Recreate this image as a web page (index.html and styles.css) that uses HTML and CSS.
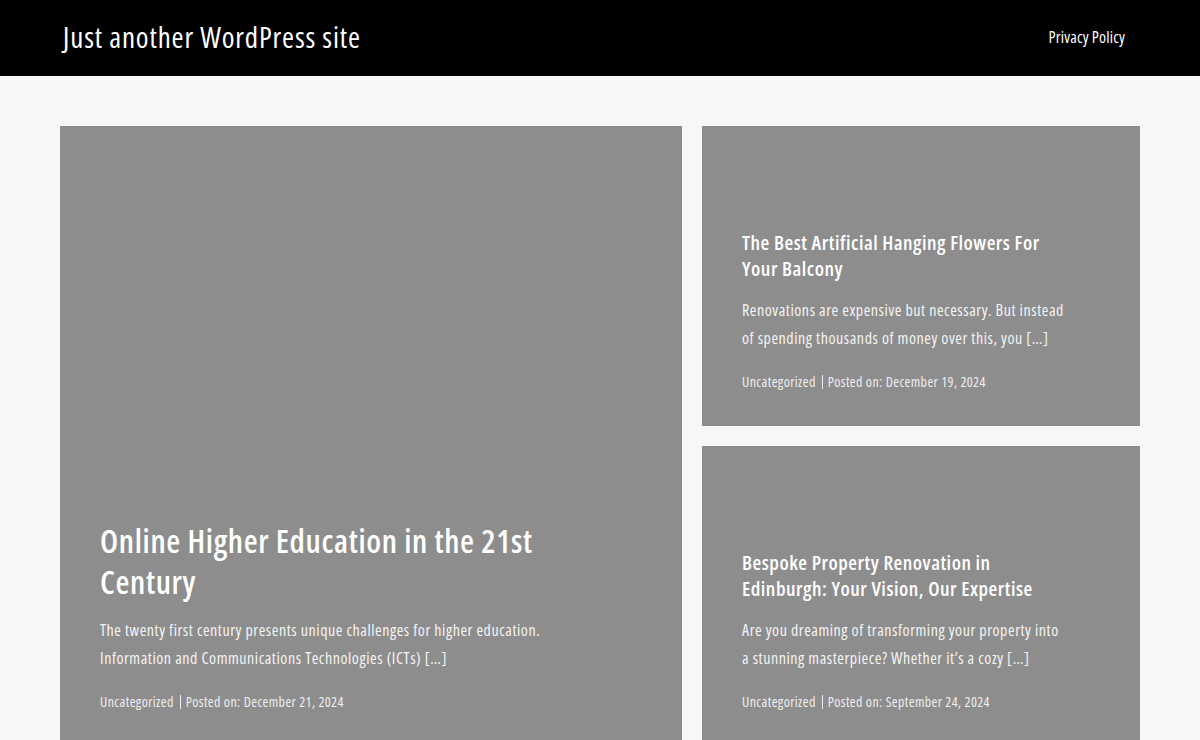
FILE: index.html
```html
<!DOCTYPE html>
<html lang="en">
<head>
<meta charset="utf-8">
<title>Just another WordPress site</title>
<link rel="stylesheet" href="styles.css">
</head>
<body>
<header class="site-header">
  <div class="header-inner">
    <a class="site-title" href="#">Just another WordPress site</a>
    <nav class="main-nav"><a href="#">Privacy Policy</a></nav>
  </div>
</header>
<main class="posts">
  <article class="card card-large">
    <h2 class="card-title">Online Higher Education in the 21st Century</h2>
    <p class="card-excerpt">The twenty first century presents unique challenges for higher education. Information and Communications Technologies (ICTs) [&hellip;]</p>
    <div class="card-meta"><span class="cat">Uncategorized</span><span class="sep"></span><span>Posted on: December 21, 2024</span></div>
  </article>
  <article class="card">
    <h2 class="card-title">The Best Artificial Hanging Flowers For Your Balcony</h2>
    <p class="card-excerpt">Renovations are expensive but necessary. But instead of spending thousands of money over this, you [&hellip;]</p>
    <div class="card-meta"><span class="cat">Uncategorized</span><span class="sep"></span><span>Posted on: December 19, 2024</span></div>
  </article>
  <article class="card">
    <h2 class="card-title">Bespoke Property Renovation in Edinburgh: Your Vision, Our Expertise</h2>
    <p class="card-excerpt">Are you dreaming of transforming your property into a stunning masterpiece? Whether it&rsquo;s a cozy [&hellip;]</p>
    <div class="card-meta"><span class="cat">Uncategorized</span><span class="sep"></span><span>Posted on: September 24, 2024</span></div>
  </article>
</main>
</body>
</html>
```
FILE: styles.css
```css
* { box-sizing: border-box; }
html, body { margin: 0; padding: 0; }
body {
  background: #f7f7f7;
  font-family: "Open Sans", "DejaVu Sans Condensed", sans-serif;
  font-stretch: 75%;
  color: #fff;
  overflow: hidden;
}
a { color: inherit; text-decoration: none; }

.site-header { background: #000; height: 76px; }
.header-inner {
  width: 1080px;
  margin: 0 auto;
  height: 100%;
  display: flex;
  align-items: center;
  justify-content: space-between;
  padding: 0 15px 3px 3px;
}
.site-title { font-size: 29px; letter-spacing: 0.85px; color: #fff; }
.main-nav a { font-size: 16px; letter-spacing: 0.2px; color: #fff; }

.posts {
  width: 1080px;
  margin: 50px auto 0;
  display: grid;
  grid-template-columns: 622px 438px;
  grid-template-rows: 300px 300px;
  gap: 20px;
}
.card {
  background: #8d8d8d;
  display: flex;
  flex-direction: column;
  justify-content: flex-end;
  padding: 40px 40px 34px;
}
.card-large { grid-row: 1 / span 2; }

.card-title {
  margin: 0 0 14px;
  font-size: 20px;
  line-height: 26px;
  font-weight: 600;
  letter-spacing: 0.5px;
  color: #fff;
  max-width: 325px;
}
.card-large .card-title {
  font-size: 32px;
  line-height: 41px;
  letter-spacing: 0.65px;
  max-width: 470px;
}
.card-excerpt {
  margin: 0 0 20px;
  font-size: 16px;
  line-height: 28px;
  letter-spacing: 0.55px;
  color: #f4f4f4;
  max-width: 323px;
}
.card-large .card-excerpt { max-width: 470px; }
.card-meta {
  font-size: 14px;
  line-height: 20px;
  letter-spacing: 0.4px;
  color: #eeeeee;
  display: flex;
  align-items: center;
}
.sep {
  width: 1px;
  height: 14px;
  background: #eeeeee;
  margin: 0 5px 0 6px;
}
```
